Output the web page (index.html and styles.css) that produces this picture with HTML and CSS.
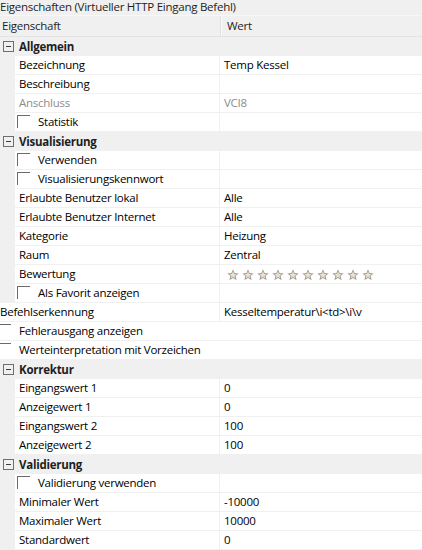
FILE: index.html
```html
<!DOCTYPE html>
<html lang="de">
<head>
<meta charset="utf-8">
<title>Eigenschaften</title>
<link rel="stylesheet" href="styles.css">
</head>
<body>
<svg width="0" height="0" class="defs">
  <defs>
    <linearGradient id="sg" x1="0" y1="0" x2="0" y2="1">
      <stop offset="0" stop-color="#f4f1ea"/>
      <stop offset="1" stop-color="#d9d3c6"/>
    </linearGradient>
    <symbol id="star" viewBox="0 0 12 12">
      <path d="M6 0.3 L7.6 4.1 L11.7 4.4 L8.6 7.1 L9.6 11.3 L6 9.1 L2.4 11.3 L3.4 7.1 L0.3 4.4 L4.4 4.1 Z" fill="#a69e8f"/>
      <path d="M6 2.6 L7 5 L9.6 5.2 L7.6 6.9 L8.2 9.5 L6 8.1 L3.8 9.5 L4.4 6.9 L2.4 5.2 L5 5 Z" fill="url(#sg)"/>
    </symbol>
  </defs>
</svg>
<div class="grid">
  <div class="title">Eigenschaften (Virtueller HTTP Eingang Befehl)</div>
  <div class="header">
    <div class="hname">Eigenschaft</div>
    <div class="hval">Wert</div>
  </div>

  <div class="cat"><span class="minus"></span><span class="ctext">Allgemein</span></div>
  <div class="row"><div class="name">Bezeichnung</div><div class="val">Temp Kessel</div></div>
  <div class="row"><div class="name">Beschreibung</div><div class="val"></div></div>
  <div class="row dis"><div class="name">Anschluss</div><div class="val">VCI8</div></div>
  <div class="row"><div class="name chk"><span class="box"></span>Statistik</div><div class="val"></div></div>

  <div class="cat"><span class="minus"></span><span class="ctext">Visualisierung</span></div>
  <div class="row"><div class="name chk"><span class="box"></span>Verwenden</div><div class="val"></div></div>
  <div class="row"><div class="name chk"><span class="box"></span>Visualisierungskennwort</div><div class="val"></div></div>
  <div class="row"><div class="name">Erlaubte Benutzer lokal</div><div class="val">Alle</div></div>
  <div class="row"><div class="name">Erlaubte Benutzer Internet</div><div class="val">Alle</div></div>
  <div class="row"><div class="name">Kategorie</div><div class="val">Heizung</div></div>
  <div class="row"><div class="name">Raum</div><div class="val">Zentral</div></div>
  <div class="row"><div class="name">Bewertung</div><div class="val stars">
    <svg class="star"><use href="#star"/></svg><svg class="star"><use href="#star"/></svg><svg class="star"><use href="#star"/></svg><svg class="star"><use href="#star"/></svg><svg class="star"><use href="#star"/></svg><svg class="star"><use href="#star"/></svg><svg class="star"><use href="#star"/></svg><svg class="star"><use href="#star"/></svg><svg class="star"><use href="#star"/></svg><svg class="star"><use href="#star"/></svg>
  </div></div>
  <div class="row"><div class="name chk"><span class="box"></span>Als Favorit anzeigen</div><div class="val"></div></div>
  <div class="row shift"><div class="name">Befehlserkennung</div><div class="val">Kesseltemperatur\i&lt;td&gt;\i\v</div></div>
  <div class="row shift"><div class="name chk"><span class="box"></span>Fehlerausgang anzeigen</div><div class="val"></div></div>
  <div class="row shift"><div class="name chk"><span class="box"></span>Werteinterpretation mit Vorzeichen</div><div class="val"></div></div>

  <div class="cat"><span class="minus"></span><span class="ctext">Korrektur</span></div>
  <div class="row"><div class="name">Eingangswert 1</div><div class="val">0</div></div>
  <div class="row"><div class="name">Anzeigewert 1</div><div class="val">0</div></div>
  <div class="row"><div class="name">Eingangswert 2</div><div class="val">100</div></div>
  <div class="row"><div class="name">Anzeigewert 2</div><div class="val">100</div></div>

  <div class="cat"><span class="minus"></span><span class="ctext">Validierung</span></div>
  <div class="row"><div class="name chk"><span class="box"></span>Validierung verwenden</div><div class="val"></div></div>
  <div class="row"><div class="name">Minimaler Wert</div><div class="val">-10000</div></div>
  <div class="row"><div class="name">Maximaler Wert</div><div class="val">10000</div></div>
  <div class="row"><div class="name">Standardwert</div><div class="val">0</div></div>
</div>
</body>
</html>
```
FILE: styles.css
```css
html, body {
  margin: 0;
  padding: 0;
  background: #f0f0f0;
}
body {
  font-family: "Open Sans", "Noto Sans", sans-serif;
  font-size: 11.5px;
  letter-spacing: -0.25px;
  color: #000;
  overflow: hidden;
}
.defs {
  position: absolute;
  width: 0;
  height: 0;
}
.grid {
  width: 422px;
  display: flex;
  flex-direction: column;
}
.title {
  height: 15px;
  line-height: 13px;
  padding-left: 0;
  color: #1e1e1e;
  white-space: nowrap;
  border-bottom: 1px solid #f7f7f7;
}
.header {
  height: 20px;
  display: flex;
  border-bottom: 1px solid #e3e3e3;
  color: #1e1e1e;
}
.hname {
  width: 218px;
  padding-left: 2px;
  line-height: 20px;
  border-right: 1px solid #e0e0e0;
}
.hval {
  padding-left: 5px;
  line-height: 20px;
  border-left: 1px solid #fafafa;
}
.cat {
  height: 19px;
  display: flex;
  align-items: center;
  background: #f0f0f0;
}
.minus {
  width: 9px;
  height: 9px;
  margin-left: 3px;
  border: 1px solid #6e6e6e;
  position: relative;
  flex: none;
}
.minus::after {
  content: "";
  position: absolute;
  left: 2px;
  top: 4px;
  width: 5px;
  height: 1px;
  background: #3c3c3c;
}
.ctext {
  margin-left: 5px;
  font-weight: 700;
  color: #1e1e1e;
  line-height: 18px;
}
.row {
  height: 19px;
  display: flex;
  align-items: flex-start;
  padding-left: 15px;
  background: #f0f0f0;
}
.name {
  width: 200px;
  height: 18px;
  line-height: 18px;
  padding-left: 4px;
  background: #fff;
  white-space: nowrap;
  display: flex;
  align-items: flex-start;
  flex: none;
}
.val {
  flex: 1;
  height: 18px;
  line-height: 18px;
  margin-left: 1px;
  padding-left: 4px;
  background: #fff;
  white-space: nowrap;
}
.dis .name, .dis .val {
  color: #8d8d8d;
}
.name.chk {
  padding-left: 2px;
  width: 202px;
}
.box {
  width: 12px;
  height: 12px;
  margin-top: 2px;
  margin-right: 8px;
  border-top: 1px solid #6a6a6a;
  border-left: 1px solid #6a6a6a;
  background: #fff;
  flex: none;
}
.shift {
  padding-left: 0;
}
.shift .name {
  width: 219px;
  padding-left: 0;
}
.shift .name.chk {
  width: 221px;
  padding-left: 0;
  margin-left: -2px;
  margin-right: -2px;
}
.stars {
  display: flex;
  gap: 3px;
  padding-left: 7px;
  padding-top: 4px;
  box-sizing: border-box;
}
.star {
  width: 12px;
  height: 12px;
  flex: none;
}
```
